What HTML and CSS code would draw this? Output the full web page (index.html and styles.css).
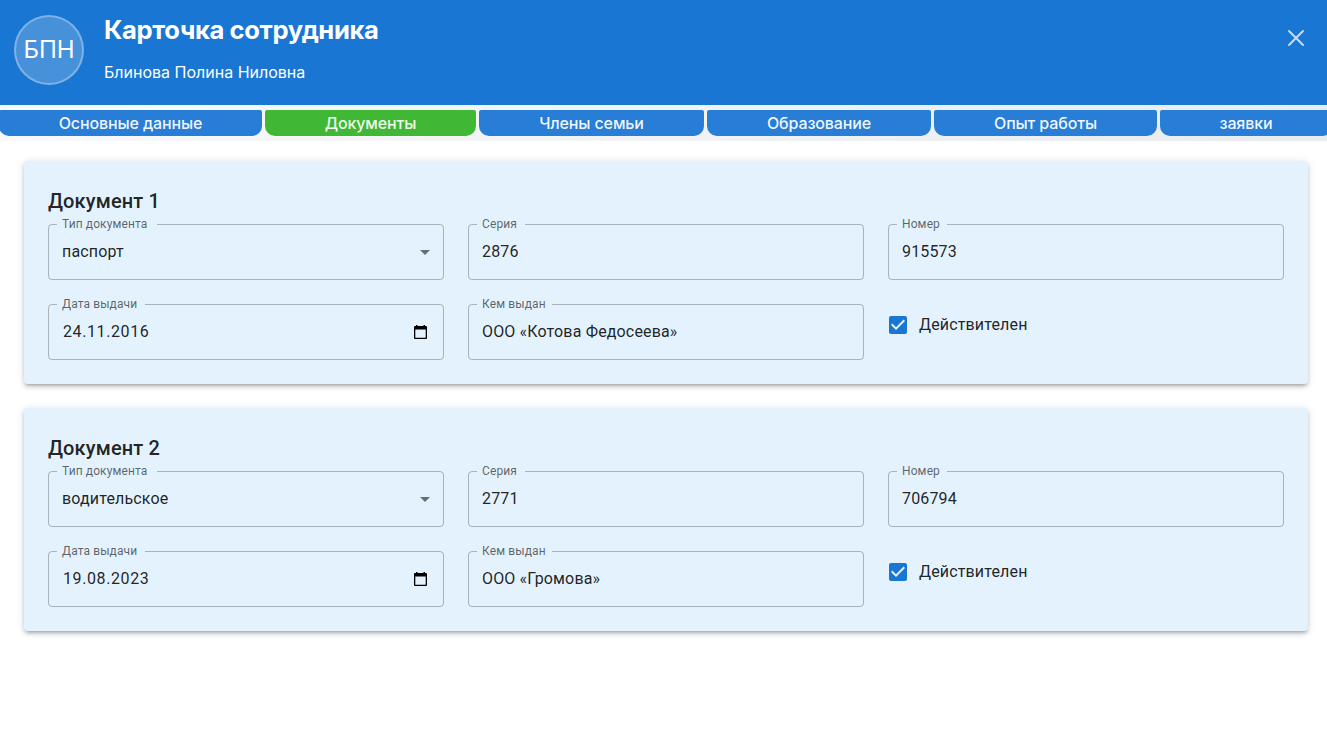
FILE: index.html
```
<!DOCTYPE html>
<html lang="ru">
<head>
<meta charset="utf-8">
<title>Карточка сотрудника</title>
<link rel="stylesheet" href="styles.css">
</head>
<body>
<header class="header">
  <div class="avatar">БПН</div>
  <div class="heading">
    <h1 class="title">Карточка сотрудника</h1>
    <div class="person">Блинова Полина Ниловна</div>
  </div>
  <svg class="close" width="24" height="24" viewBox="0 0 24 24"><path d="M5 5L19 19M19 5L5 19"/></svg>
</header>
<nav class="tabs">
  <div class="tab">Основные данные</div>
  <div class="tab tab-active">Документы</div>
  <div class="tab">Члены семьи</div>
  <div class="tab">Образование</div>
  <div class="tab">Опыт работы</div>
  <div class="tab">заявки</div>
</nav>
<main class="content">
  <section class="card">
    <h2 class="card-title">Документ 1</h2>
    <div class="grid">
      <fieldset class="field"><legend class="notch-type">Тип документа</legend><span class="value">паспорт</span><svg class="arrow" width="24" height="24" viewBox="0 0 24 24"><path d="M7 10l5 5 5-5z"/></svg></fieldset>
      <fieldset class="field"><legend class="notch-series">Серия</legend><span class="value">2876</span></fieldset>
      <fieldset class="field"><legend class="notch-number">Номер</legend><span class="value">915573</span></fieldset>
      <fieldset class="field"><legend class="notch-date">Дата выдачи</legend><span class="value date">24.11.2016</span><svg class="calendar" width="15" height="16" viewBox="0 0 15 16"><path fill-rule="evenodd" d="M2 2h1V1h1.500v1h6V1H12v1h1a1 1 0 0 1 1 1v11a1 1 0 0 1-1 1H2a1 1 0 0 1-1-1V3a1 1 0 0 1 1-1zM2.300 5.500v8.200h10.400V5.500z"/></svg></fieldset>
      <fieldset class="field"><legend class="notch-issuer">Кем выдан</legend><span class="value">ООО «Котова Федосеева»</span></fieldset>
      <div class="check"><svg class="box" width="24" height="24" viewBox="0 0 24 24"><path d="M19 3H5c-1.110 0-2 .9-2 2v14c0 1.100.89 2 2 2h14c1.110 0 2-.9 2-2V5c0-1.100-.89-2-2-2zm-9 14l-5-5 1.410-1.410L10 14.170l7.590-7.590L19 8l-9 9z"/></svg><span>Действителен</span></div>
    </div>
  </section>
  <section class="card">
    <h2 class="card-title">Документ 2</h2>
    <div class="grid">
      <fieldset class="field"><legend class="notch-type">Тип документа</legend><span class="value">водительское</span><svg class="arrow" width="24" height="24" viewBox="0 0 24 24"><path d="M7 10l5 5 5-5z"/></svg></fieldset>
      <fieldset class="field"><legend class="notch-series">Серия</legend><span class="value">2771</span></fieldset>
      <fieldset class="field"><legend class="notch-number">Номер</legend><span class="value">706794</span></fieldset>
      <fieldset class="field"><legend class="notch-date">Дата выдачи</legend><span class="value date">19.08.2023</span><svg class="calendar" width="15" height="16" viewBox="0 0 15 16"><path fill-rule="evenodd" d="M2 2h1V1h1.500v1h6V1H12v1h1a1 1 0 0 1 1 1v11a1 1 0 0 1-1 1H2a1 1 0 0 1-1-1V3a1 1 0 0 1 1-1zM2.300 5.500v8.200h10.400V5.500z"/></svg></fieldset>
      <fieldset class="field"><legend class="notch-issuer">Кем выдан</legend><span class="value">ООО «Громова»</span></fieldset>
      <div class="check"><svg class="box" width="24" height="24" viewBox="0 0 24 24"><path d="M19 3H5c-1.110 0-2 .9-2 2v14c0 1.100.89 2 2 2h14c1.110 0 2-.9 2-2V5c0-1.100-.89-2-2-2zm-9 14l-5-5 1.410-1.410L10 14.170l7.590-7.590L19 8l-9 9z"/></svg><span>Действителен</span></div>
    </div>
  </section>
</main>
</body>
</html>
```
FILE: styles.css
```
* { box-sizing: border-box; }
body {
  margin: 0;
  height: 737px;
  overflow: hidden;
  background: #fff;
  font-family: Roboto, sans-serif;
  font-size: 16px;
  letter-spacing: 0.15px;
  color: rgba(0, 0, 0, 0.87);
}
.header {
  display: flex;
  height: 105px;
  padding: 15px 19px 0 14px;
  background: #1976d2;
  color: #fff;
  font-family: Inter, sans-serif;
  letter-spacing: 0;
}
.avatar {
  width: 70px;
  height: 70px;
  border: 2px solid rgba(255, 255, 255, 0.3);
  border-radius: 50%;
  background: rgba(255, 255, 255, 0.2);
  font-size: 24px;
  line-height: 66px;
  text-align: center;
}
.heading { flex: 1; margin-left: 20px; }
.title { margin: 0; font-size: 25.600px; font-weight: 700; line-height: 30px; letter-spacing: -0.380px; }
.person { margin-top: 17px; font-size: 16px; line-height: 20px; }
.close {
  margin-top: 11px;
  fill: none;
  stroke: rgba(255, 255, 255, 0.75);
  stroke-width: 2;
  stroke-linecap: round;
}
.tabs {
  display: grid;
  grid-template-columns: 263px 211px 225px 224px 223px 172px;
  gap: 3px;
  width: 100%;
  height: 36px;
  padding: 5px 0;
  overflow: hidden;
  background: linear-gradient(135deg, #f8f9fa 0%, #e9ecef 100%);
}
.tab {
  border-radius: 2px 2px 10px 10px;
  background: #287ed7;
  color: rgba(255, 255, 255, 0.95);
  font: 500 16px/26px Inter, sans-serif;
  letter-spacing: -0.120px;
  text-align: center;
}
.tab:first-child { margin-left: -1px; margin-right: 1px; }
.tab-active { background: #40b835; }
.tab:nth-child(n+2) { margin-left: -1px; margin-right: 1px; }
.content {
  display: flex;
  flex-direction: column;
  gap: 24px;
  padding: 20px 19px 0 24px;
}
.card {
  height: 223px;
  padding: 24px;
  border-radius: 4px;
  background: #e3f2fd;
  box-shadow: 0 3px 3px -2px rgba(0, 0, 0, 0.2), 0 3px 4px 0 rgba(0, 0, 0, 0.14), 0 1px 8px 0 rgba(0, 0, 0, 0.12);
}
.card-title { margin: 0 0 1px; font-size: 20px; font-weight: 500; line-height: 32px; }
.grid {
  display: grid;
  grid-template-columns: repeat(3, 1fr);
  gap: 18px 24px;
}
.field {
  display: flex;
  align-items: center;
  min-width: 0;
  height: 62px;
  margin: 0;
  padding: 0 6px 6px 8px;
  border: 1px solid rgba(0, 0, 0, 0.26);
  border-radius: 4px;
}
.field legend {
  height: 12px;
  padding: 0 0 0 5px;
  color: rgba(0, 0, 0, 0.6);
  font-size: 12px;
  line-height: 12px;
  letter-spacing: 0.110px;
  white-space: nowrap;
}
.notch-type { width: 100px; }
.notch-series { width: 48px; }
.notch-number { width: 50px; }
.notch-date { width: 88px; }
.notch-issuer { width: 75px; }
.value { flex: 1; padding-left: 5px; line-height: 23px; }
.date { padding-left: 6px; letter-spacing: 0.600px; }
.arrow { margin-top: 1px; fill: rgba(0, 0, 0, 0.54); }
.calendar { margin-right: 9.500px; fill: #000; }
.check {
  display: flex;
  align-items: center;
  gap: 9px;
  height: 42px;
  margin: 6px 0 0 -2px;
}
.check span { padding-bottom: 1px; line-height: 23px; }
.box { fill: #1976d2; }
```
